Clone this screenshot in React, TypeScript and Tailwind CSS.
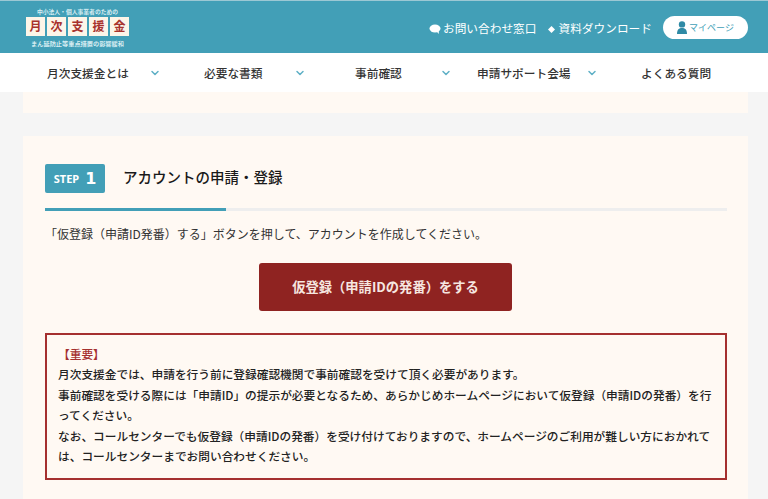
import { ChevronDown } from "lucide-react";

const jp = "font-['Noto_Sans_CJK_JP','Noto_Sans',sans-serif]";

const navItems = [
  { label: "月次支援金とは", w: "w-[157px]", gap: "ml-[20px]" },
  { label: "必要な書類", w: "w-[151px]", gap: "ml-[32px]" },
  { label: "事前確認", w: "w-[122px]", gap: "ml-[38px]" },
  { label: "申請サポート会場", w: "w-[164px]", gap: "ml-[15px]" },
  { label: "よくある質問", w: "w-[127px]", gap: "" },
];

function Logo() {
  return (
    <div className="flex w-[103px] flex-col items-center">
      <div className="text-[5.8px] leading-[7px] font-bold whitespace-nowrap text-[#d7edf2]">中小法人・個人事業者のための</div>
      <div className="mt-[2px] flex gap-[2px]">
        {["月", "次", "支", "援", "金"].map((c) => (
          <div key={c} className="flex h-[19px] w-[19px] items-center justify-center bg-[#fdf5e8] text-[12px] leading-none font-bold text-[#a8322d]">
            {c}
          </div>
        ))}
      </div>
      <div className="mt-[4px] text-[6.2px] leading-[7px] font-bold whitespace-nowrap text-[#d7edf2]">まん延防止等重点措置の影響緩和</div>
    </div>
  );
}

export default function App() {
  return (
    <div className={`h-[499px] w-[768px] overflow-hidden bg-[#f5f5f5] ${jp}`}>
      <header className="flex h-[53px] items-center justify-between border-t border-[#9cc8d4] bg-[#429fb7] pr-[20px] pl-[26px]">
        <Logo />
        <div className="flex items-center text-white">
          <svg width="12" height="10" viewBox="0 0 12 10" className="mt-[4px] mr-[2px]">
            <ellipse cx="6" cy="4.5" rx="5.5" ry="4" fill="#fff" />
            <path d="M7 7l3 3-.5-4z" fill="#fff" />
          </svg>
          <span className="mt-[1px] text-[11.7px] leading-none">お問い合わせ窓口</span>
          <svg width="7" height="7" viewBox="0 0 7 7" className="mt-[5px] mr-[3px] ml-[12px]">
            <path d="M3.500 0L7 3.500 3.500 7 0 3.500z" fill="#fff" />
          </svg>
          <span className="mt-[1px] text-[11.7px] leading-none">資料ダウンロード</span>
          <div className="ml-[11px] flex h-[23px] w-[85px] items-center justify-center rounded-full bg-white text-[#429fb7]">
            <svg width="10" height="13" viewBox="0 0 10 13" className="mr-[2px]">
              <circle cx="5" cy="3.4" r="3.2" fill="#2f8aa5" />
              <path d="M0 13c0-4.500 2-6 5-6s5 1.500 5 6z" fill="#2f8aa5" />
            </svg>
            <span className="text-[9px] leading-none">マイページ</span>
          </div>
        </div>
      </header>

      <nav className="flex h-[39px] items-center bg-white pl-[47px]">
        {navItems.map((item) => (
          <div key={item.label} className={`flex items-center ${item.w} text-[11.7px] font-medium text-[#333]`}>
            <span className="whitespace-nowrap">{item.label}</span>
            {item.gap && <ChevronDown size={12} strokeWidth={3} className={`mt-[2px] ${item.gap} text-[#5fb0c6]`} />}
          </div>
        ))}
      </nav>

      <main className="mx-[23px] w-[725px]">
        <div className="h-[21px] bg-[#fff9f3]" />
        <section className="mt-[23px] h-[400px] bg-[#fff9f3] pt-[28px] pr-[21px] pl-[22px]">
          <div className="flex items-center">
            <div className="flex h-[29px] w-[60px] items-center justify-center gap-[6px] rounded-[2px] bg-[#429fb7] font-bold text-white">
              <span className="text-[11px] leading-none font-['Noto_Sans',sans-serif]">STEP</span>
              <span className="text-[16px] leading-none font-['DejaVu_Sans',sans-serif]">1</span>
            </div>
            <h2 className="mb-[3px] ml-[18px] text-[14.5px] font-medium text-[#1a1a1a]">アカウントの申請・登録</h2>
          </div>
          <div className="mt-[15px] flex h-[3px]">
            <div className="w-[181px] bg-[#429fb7]" />
            <div className="flex-1 bg-[#eeeeee]" />
          </div>
          <p className="mt-[14px] text-[12px] leading-[18px] text-[#333]">「仮登録（申請ID発番）する」ボタンを押して、アカウントを作成してください。</p>
          <div className="mt-[20px] flex pl-[214px]">
            <div className="flex h-[48px] w-[253px] items-center justify-center rounded-[3px] bg-[#8f2321] text-[13.3px] font-bold text-[#f6e6e0]">
              仮登録（申請IDの発番）をする
            </div>
          </div>
          <div className="mt-[22px] h-[147px] border-2 border-[#a5302f] pt-[9px] pr-[10px] pl-[11px] text-[11.7px] leading-[20.4px] font-medium text-[#222]">
            <div className="text-[#a5302f]">【重要】</div>
            <p>月次支援金では、申請を行う前に登録確認機関で事前確認を受けて頂く必要があります。</p>
            <p>事前確認を受ける際には「申請ID」の提示が必要となるため、あらかじめホームページにおいて仮登録（申請IDの発番）を行ってください。</p>
            <p>なお、コールセンターでも仮登録（申請IDの発番）を受け付けておりますので、ホームページのご利用が難しい方におかれては、コールセンターまでお問い合わせください。</p>
          </div>
        </section>
      </main>
    </div>
  );
}
